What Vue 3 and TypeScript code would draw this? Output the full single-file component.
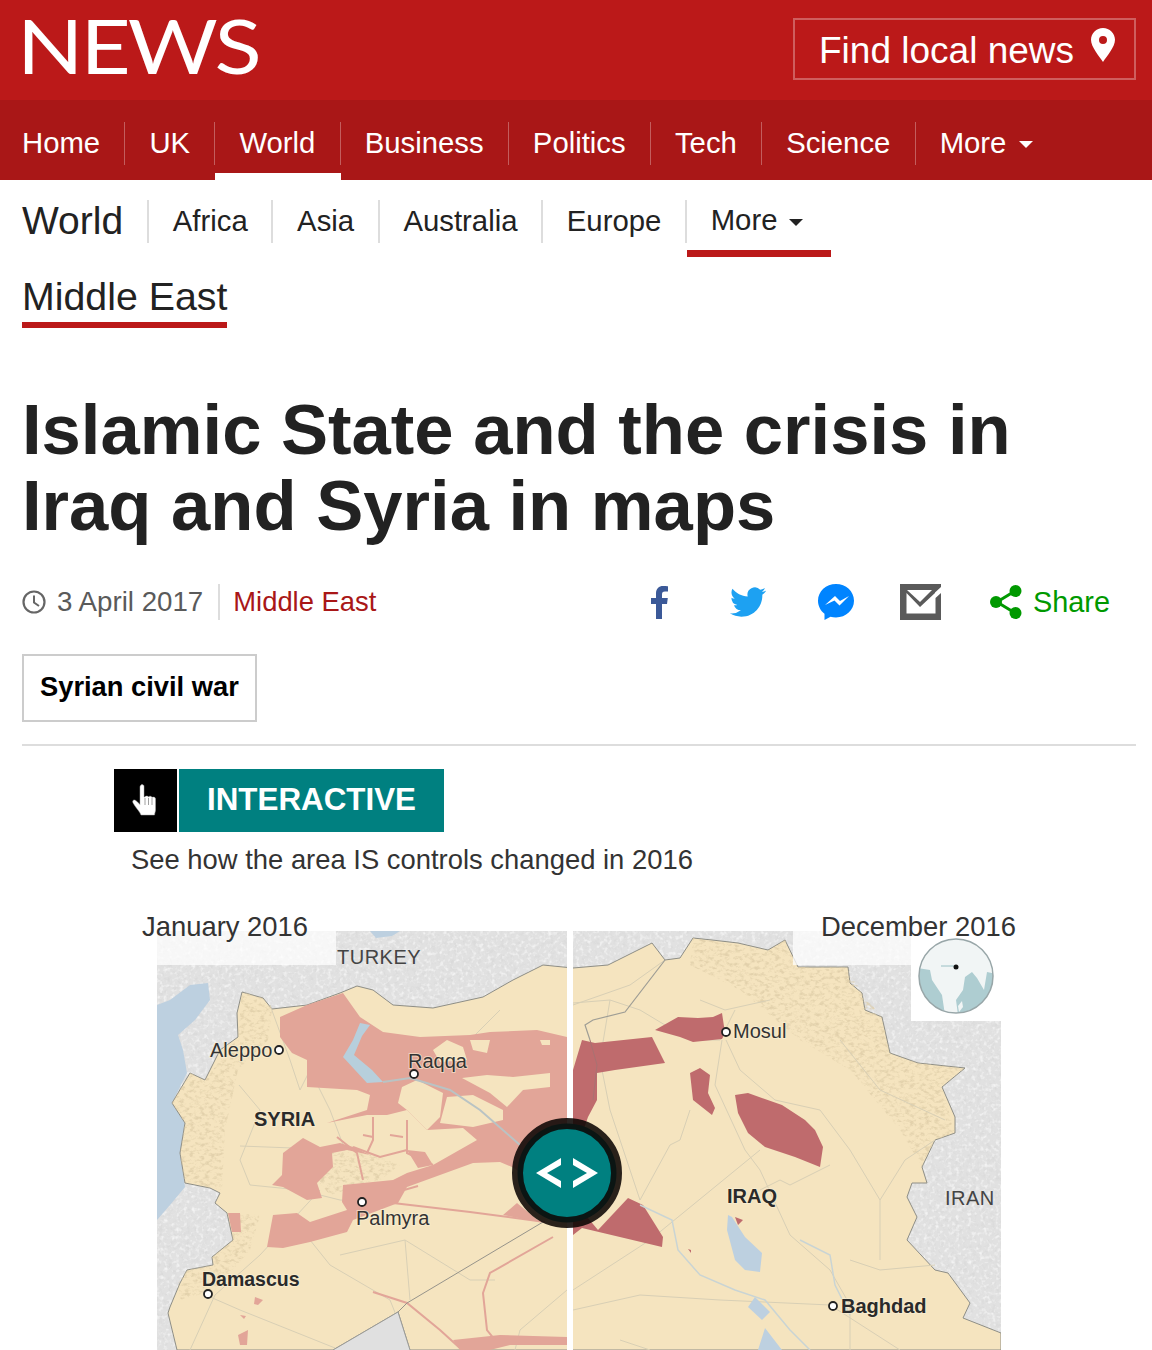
<script setup lang="ts">
const mainNav: string[] = ['Home', 'UK', 'World', 'Business', 'Politics', 'Tech', 'Science'];
const subNav: string[] = ['Africa', 'Asia', 'Australia', 'Europe'];

const roads: string[] = [
  'M573 1003 L610 1000 L640 1010 L690 1040 L720 1040 L735 1010',
  'M726 1040 L740 1070 L775 1100 L820 1110 L850 1150 L880 1200 L880 1260',
  'M722 1040 L715 1085 L745 1150 L760 1170 L790 1235 L830 1270 L850 1305 L850 1350',
  'M760 1150 L650 1240 L573 1290',
  'M610 1000 L600 1060 L610 1110 L640 1200',
  'M690 1110 L680 1140 L670 1145 L640 1200',
  'M830 1165 L790 1185 L780 1180 L760 1190',
  'M573 1310 L640 1295 L720 1300 L830 1305 L900 1350',
  'M850 1260 L880 1270 L935 1265',
  'M880 1200 L905 1160 L935 1140',
  'M573 1005 L630 985 L665 960',
  'M620 1340 L650 1350',
  'M700 1000 L725 1010 L770 1000',
  'M840 1040 L880 1090 L945 1120',
  'M239 1085 L260 1110 L240 1160 L250 1185 L300 1190 L340 1200 L397 1203',
  'M240 1146 L345 1150 L330 1110 L310 1070 L300 1090',
  'M320 1190 L260 1255 L215 1295 L190 1350',
  'M310 1240 L330 1265 L390 1300 L410 1350',
  'M405 1240 L410 1300',
  'M340 1255 L405 1240 L470 1280 L495 1280',
  'M208 1296 L240 1310 L340 1350',
  'M567 1290 L520 1330 L515 1350',
  'M270 1005 L290 1060 L300 1090',
  'M500 1010 L470 1040 L445 1100',
];
const redRoads: string[] = [
  'M337 1137 L357 1153 L363 1180',
  'M373 1117 L373 1140 L367 1153',
  'M407 1120 L407 1153 L433 1165',
  'M353 1147 L380 1157 L407 1150',
  'M363 1135 L373 1137',
  'M390 1135 L403 1137',
  'M393 1203 L470 1212 L545 1222',
  'M373 1292 L407 1303 L440 1330 L462 1350',
  'M553 1237 L490 1273 L483 1293 L487 1330 L495 1340',
  'M404 1190 L418 1186',
];
</script>

<template>
  <div class="page">
    <header class="masthead">
      <div class="logo">NEWS</div>
      <a class="local">
        <span>Find local news</span>
        <svg class="pin" viewBox="0 0 24 34" width="24" height="34">
          <path fill-rule="evenodd" fill="#fff" d="M12 0C5.400 0 0 5.300 0 11.800 0 19 8 28 12 34c4-6 12-15 12-22.200C24 5.300 18.600 0 12 0Zm0 8a4 4 0 1 1 0 8 4 4 0 0 1 0-8Z" />
        </svg>
      </a>
    </header>

    <nav class="mainnav">
      <a v-for="n in mainNav" :key="n" class="mainitem" :class="{ on: n === 'World' }">{{ n }}</a>
      <a class="mainitem last">More<i class="caret white"></i></a>
    </nav>

    <nav class="subnav">
      <a class="subhead">World</a>
      <a v-for="n in subNav" :key="n" class="subitem">{{ n }}</a>
      <a class="subitem more">More<i class="caret"></i></a>
    </nav>
    <div class="secondrow"><a class="secondlink">Middle East</a></div>

    <h1 class="title">Islamic State and the crisis in<br />Iraq and Syria in maps</h1>

    <div class="meta">
      <svg class="clock" viewBox="0 0 24 24" width="24" height="24">
        <circle cx="12" cy="12" r="10.500" fill="none" stroke="#666" stroke-width="2.200" />
        <path d="M12 5.500V12.500L17 16" fill="none" stroke="#666" stroke-width="2" />
      </svg>
      <span class="date">3 April 2017</span>
      <a class="section">Middle East</a>
      <div class="shares">
        <svg class="fb" viewBox="0 0 17 33" width="17" height="33">
          <path fill="#3b5998" d="M5 33V18H0v-6h5V7.500C5 2.500 8 0 12 0c2 0 4 .2 5 .3V5.500h-3c-2.400 0-3 1.100-3 3V12h5.800L16 18h-5v15Z" />
        </svg>
        <svg class="tw" viewBox="0 0 24 24" width="36" height="36">
          <path fill="#1da1f2" d="M23.953 4.570a10 10 0 0 1-2.825.775 4.958 4.958 0 0 0 2.163-2.723c-.951.555-2.005.959-3.127 1.184a4.920 4.920 0 0 0-8.384 4.482C7.690 8.095 4.067 6.130 1.640 3.162a4.822 4.822 0 0 0-.666 2.475c0 1.710.870 3.213 2.188 4.096a4.904 4.904 0 0 1-2.228-.616v.060a4.923 4.923 0 0 0 3.946 4.827 4.996 4.996 0 0 1-2.212.085 4.936 4.936 0 0 0 4.604 3.417 9.867 9.867 0 0 1-6.102 2.105c-.390 0-.779-.023-1.170-.067a13.995 13.995 0 0 0 7.557 2.209c9.053 0 13.998-7.496 13.998-13.985 0-.210 0-.420-.015-.630A9.935 9.935 0 0 0 24 4.590z" />
        </svg>
        <svg class="ms" viewBox="0 0 36 36" width="36" height="36">
          <path fill="#0084ff" d="M18 0C8 0 0 7.400 0 16.700c0 5.200 2.500 9.900 6.500 13V36l6-3.300c1.700.5 3.500.7 5.500.7 10 0 18-7.400 18-16.700S28 0 18 0Z" />
          <path fill="#fff" d="M7 21 17 12l5 5 9-5-9.500 9.500-5-5L7 21Z" />
        </svg>
        <svg class="mail" viewBox="0 0 41 36" width="41" height="36">
          <path fill="#5a5a5a" d="M0 0h41v36H0z" />
          <path fill="#fff" d="M7 6h25L20 18 7 6Z" />
          <path fill="#fff" d="M6.500 9l13.500 14L35 9v-.5L41 3v6l-5.500 5v15.500H6.500Z" />
        </svg>
        <span class="share">
          <svg viewBox="0 0 32 34" width="32" height="34">
            <path d="M25 6 7 17l18 11" fill="none" stroke="#009900" stroke-width="3" />
            <circle cx="25.500" cy="6" r="6" fill="#009900" />
            <circle cx="6" cy="17" r="6" fill="#009900" />
            <circle cx="25.500" cy="28" r="6" fill="#009900" />
          </svg>
          <span>Share</span>
        </span>
      </div>
    </div>

    <div class="tagrow"><a class="tag">Syrian civil war</a></div>
    <div class="rule"></div>

    <div class="badge">
      <div class="hand">
        <svg viewBox="0 0 30 36" width="30" height="36">
          <path fill="#fff" stroke="#aaa" stroke-width=".5" d="M10 2c1.500-1 3 0 3 1.500V14l1 0c0-1 3-1.500 3.500 0 .5-1 3-1.200 3.500.5.800-.7 3.500-.7 3.500 1.500V27c0 2-1 3-1 5H10c-1-3-4-6-6-9-1.500-2.500-3-4-2-5.500 1-1 2.500-.5 4 1l3 3V4c0-1 .5-1.500 1-2Z" />
          <path stroke="#888" stroke-width=".8" d="M14 15v7M17.500 15v7M21 15v7" />
        </svg>
      </div>
      <div class="label">INTERACTIVE</div>
    </div>
    <p class="lede">See how the area IS controls changed in 2016</p>

    <div class="mapwrap">
      <svg class="map" viewBox="157 905 844 445" width="844" height="445">
        <defs>
          <filter id="greyrelief" x="0" y="0" width="100%" height="100%">
            <feTurbulence type="fractalNoise" baseFrequency="0.22" numOctaves="3" seed="4" />
            <feColorMatrix type="matrix" values="0 0 0 0 .66  0 0 0 0 .66  0 0 0 0 .66  3 0 0 0 -1.450" />
          </filter>
          <filter id="whiterelief" x="0" y="0" width="100%" height="100%">
            <feTurbulence type="fractalNoise" baseFrequency="0.25" numOctaves="3" seed="11" />
            <feColorMatrix type="matrix" values="0 0 0 0 1  0 0 0 0 1  0 0 0 0 1  0 3 0 0 -1.500" />
          </filter>
          <filter id="tanrelief" x="0" y="0" width="100%" height="100%">
            <feTurbulence type="fractalNoise" baseFrequency="0.2 0.3" numOctaves="3" seed="7" />
            <feColorMatrix type="matrix" values="0 0 0 0 .72  0 0 0 0 .6  0 0 0 0 .38  3.500 0 0 0 -1.650" />
          </filter>
          <clipPath id="leftclip"><rect x="157" y="931" width="410" height="419" /></clipPath>
          <clipPath id="rightclip"><rect x="573" y="931" width="428" height="419" /></clipPath>
          <clipPath id="mapclip"><rect x="157" y="931" width="844" height="419" /></clipPath>
          <clipPath id="mtn">
            <polygon points="693,938 768,950 785,940 798,967 848,967 862,993 882,1017 890,1053 918,1063 965,1068 942,1087 955,1133 935,1140 922,1167 900,1130 850,1070 800,1040 740,990 690,965" />
            <polygon points="242,992 263,998 272,1009 268,1040 238,1070 225,1130 222,1190 185,1183 180,1153 185,1123 172,1103 190,1073 205,1080 238,1037" />
            <polygon points="227,1213 260,1215 250,1250 215,1290 180,1300 178,1283 187,1270 213,1265 212,1257 233,1240" />
            <polygon points="300,1160 350,1145 400,1165 380,1180 330,1195" />
          </clipPath>
          <clipPath id="globeclip"><circle cx="956" cy="976" r="37" /></clipPath>
        </defs>

        <g clip-path="url(#mapclip)">
          <rect x="157" y="931" width="844" height="419" fill="#e1e1e1" />
          <rect x="157" y="931" width="844" height="419" filter="url(#greyrelief)" opacity=".5" />
          <rect x="157" y="931" width="844" height="419" filter="url(#whiterelief)" opacity=".6" />

          <path fill="#bdd0e0" d="M157 1005 170 1000 190 985 208 983 210 1000 195 1020 178 1035 183 1050 187 1073 172 1103 185 1123 180 1153 185 1187 170 1205 157 1220Z" />
          <path fill="#bdd0e0" d="M370 931h30l-8 5-16 2Z" />

          <path fill="#f5e4bf" stroke="#8e8e86" stroke-width="1" d="M177 1350 168 1313 170 1307 180 1283 187 1270 213 1265 212 1257 233 1240 227 1213 215 1203 220 1193 210 1188 185 1183 180 1153 185 1123 172 1103 190 1073 205 1080 220 1050 238 1037 237 1013 242 992 263 998 272 1009 307 1005 340 993 357 986 373 990 393 1005 433 1008 483 997 513 980 543 965 573 968 608 965 652 943 665 960 680 958 693 938 712 940 738 943 768 950 785 940 798 967 848 967 850 983 862 993 865 1010 882 1017 890 1053 918 1063 965 1068 942 1087 955 1117 955 1133 935 1140 922 1167 927 1183 912 1183 907 1197 917 1217 907 1240 935 1270 948 1273 970 1303 963 1318 1001 1333 1001 1350 410 1350 398 1312 333 1350Z" />
          <rect x="157" y="931" width="844" height="419" clip-path="url(#mtn)" filter="url(#tanrelief)" opacity=".75" />

          <path v-for="(d, i) in roads" :key="'r' + i" :d="d" fill="none" stroke="#d8cfb5" stroke-width="1" />

          <g clip-path="url(#leftclip)">
            <path fill="#e2a598" d="M280 1017 307 1005 343 993 360 1017 383 1032 420 1037 470 1035 490 1032 537 1030 567 1037 567 1200 512 1167 500 1162 473 1163 407 1187 398 1203 353 1220 347 1232 310 1242 283 1248 267 1247 273 1215 297 1213 310 1222 347 1210 342 1202 343 1185 373 1182 393 1180 407 1173 433 1165 477 1140 463 1128 427 1130 407 1110 387 1115 367 1115 327 1123 367 1110 370 1095 357 1090 307 1087 307 1060 292 1053 280 1037Z" />
            <path fill="#e2a598" d="M283 1153 303 1138 320 1147 340 1143 353 1147 370 1155 347 1150 332 1153 333 1167 317 1183 322 1198 307 1200 283 1187 272 1185 282 1175Z" />
            <path fill="#e2a598" d="M228 1213 240 1213 241 1232 232 1232ZM503 1215 517 1203 540 1222ZM453 1340 500 1335 567 1337 567 1345 510 1345 490 1350 460 1350ZM255 1297 263 1300 258 1305 254 1304ZM240 1315 246 1316 244 1319ZM238 1335 248 1330 247 1345 240 1345ZM407 1150 425 1152 433 1165 418 1168Z" />
            <path fill="#f5e4bf" d="M402 1087 417 1080 443 1093 440 1117 427 1130 407 1110 398 1103ZM447 1097 473 1095 503 1110 503 1120 473 1127 440 1123ZM462 1078 487 1075 513 1077 550 1073 550 1087 523 1090 507 1107 490 1093ZM433 1050 447 1040 463 1047 467 1060 440 1062ZM470 1040 490 1040 487 1053 473 1050ZM540 1040 550 1040 550 1045 542 1045Z" />
            <path d="M360 1023 353 1040 343 1057 367 1083 383 1082 372 1070 354 1055 362 1036 370 1025Z" fill="#b7cfdc" />
            <path d="M383 1082 410 1078 450 1090 480 1110 520 1145" fill="none" stroke="#b9c3c4" stroke-width="2" />
            <path v-for="(d, i) in redRoads" :key="i" :d="d" fill="none" stroke="#e2a598" stroke-width="2" />
          </g>

          <g clip-path="url(#rightclip)">
            <path fill="#bf6b6d" d="M655 1030 678 1017 698 1018 713 1017 722 1013 725 1033 722 1039 693 1042 680 1037ZM573 1070 582 1040 595 1043 652 1037 665 1063 615 1070 597 1073 597 1100 588 1117 580 1140 573 1140ZM690 1073 700 1068 710 1075 708 1093 715 1108 712 1115 693 1100ZM735 1095 748 1093 782 1105 805 1120 815 1130 823 1147 820 1167 795 1157 765 1147 748 1133 738 1113ZM598 1230 628 1198 643 1205 663 1237 662 1247 582 1228 573 1235 573 1200ZM735 1217 743 1220 738 1225ZM688 1249 691 1250 691 1253Z" />
            <path fill="#bdd0e0" d="M728 1215 727 1230 735 1260 745 1270 760 1272 762 1253 745 1237 732 1217ZM748 1307 755 1297 770 1312 762 1320ZM758 1350 765 1328 782 1350Z" />
            <path d="M640 1205 672 1220 678 1250 700 1275 735 1290 765 1300 790 1330 810 1350M800 1240 830 1255 835 1285 850 1315" fill="none" stroke="#c9d4d4" stroke-width="1.500" />
          </g>

          <path d="M333 1350 398 1312 410 1350" fill="#e0e0e0" stroke="#9b9b96" stroke-width="1" />
          <path d="M398 1312 407 1303 543 1222" fill="none" stroke="#96938a" stroke-width="1" />
          <path d="M590 1040 585 1025 593 1020 625 1012 665 960" fill="none" stroke="#9e9d95" stroke-width="1.200" />
          <path d="M590 1040 597 1065 593 1100" fill="none" stroke="#a87272" stroke-width="1" clip-path="url(#rightclip)" />

          <rect x="157" y="931" width="179" height="34" fill="#fff" opacity=".72" />
          <rect x="793" y="931" width="118" height="34" fill="#fff" opacity=".72" />
          <rect x="911" y="931" width="90" height="90" fill="#fff" />

          <rect x="567" y="931" width="6" height="419" fill="#fff" />

          <g clip-path="url(#globeclip)">
            <circle cx="956" cy="976" r="37" fill="#f1f5f5" />
            <path fill="#aecdd1" d="M918 968 930 970 932 980 942 995 945 1015 925 1012 915 990Z" />
            <path fill="#aecdd1" d="M958 1015 956 1000 963 990 965 977 972 972 977 978 984 990 987 972 996 974 996 1015Z" />
            <path fill="#f1f5f5" d="M958 1006l4-5 1 6-4 5Z" />
          </g>
          <circle cx="956" cy="976" r="37" fill="none" stroke="#98a6a8" stroke-width="1.500" />
          <path d="M941 966h15" stroke="#9ac0c4" stroke-width="1" />
          <circle cx="956" cy="967" r="2.500" fill="#111" />

          <text x="337" y="964" class="t thin">TURKEY</text>
          <text x="210" y="1057" class="t">Aleppo</text>
          <text x="408" y="1068" class="t">Raqqa</text>
          <text x="254" y="1126" class="t bold">SYRIA</text>
          <text x="356" y="1225" class="t">Palmyra</text>
          <text x="202" y="1286" class="t bold dam">Damascus</text>
          <text x="733" y="1038" class="t">Mosul</text>
          <text x="727" y="1203" class="t bold">IRAQ</text>
          <text x="945" y="1205" class="t thin">IRAN</text>
          <text x="841" y="1313" class="t bold">Baghdad</text>

          <circle cx="279" cy="1050" r="4" class="dot" />
          <circle cx="414" cy="1074" r="4" class="dot" />
          <circle cx="362" cy="1202" r="4" class="dot" />
          <circle cx="208" cy="1294" r="4" class="dot" />
          <circle cx="726" cy="1032" r="4" class="dot" />
          <circle cx="833" cy="1306" r="4" class="dot" />

          <circle cx="567" cy="1173" r="49.500" fill="#008080" stroke="#0c0603" stroke-opacity=".88" stroke-width="11" />
          <path fill="#fff" d="M561 1158 536 1173 561 1188 561 1181 547 1173 561 1165ZM573 1158 598 1173 573 1188 573 1181 587 1173 573 1165Z" />
        </g>

        <text x="142" y="936" class="cap">January 2016</text>
        <text x="821" y="936" class="cap">December 2016</text>
      </svg>
    </div>
  </div>
</template>

<style scoped>
.page { width: 1152px; height: 1350px; overflow: hidden; background: #fff; font-family: "Liberation Sans", Arial, sans-serif; color: #222; }
.masthead { height: 100px; background: #bb1919; display: flex; justify-content: space-between; padding: 0 16px 0 22px; box-sizing: border-box; }
.logo { font-family: Lato, sans-serif; font-weight: 400; font-size: 75px; line-height: 90px; color: #fff; letter-spacing: -2.500px; margin-left: -5px; transform: scaleX(1.16); transform-origin: left center; }
.local { margin-top: 18px; height: 62px; width: 343px; box-sizing: border-box; border: 2px solid rgba(255,255,255,.3); display: flex; align-items: center; padding-left: 24px; color: #fff; font-size: 37px; }
.local span { margin-top: 3px; }
.pin { margin: -8px 0 0 17px; }
.mainnav { height: 80px; background: #a91717; display: flex; padding: 22px 0 0 22px; box-sizing: border-box; }
.mainitem { position: relative; height: 43px; line-height: 42px; padding: 0 24.150px; color: #fff; font-size: 29.300px; border-right: 1px solid rgba(255,255,255,.3); }
.mainitem:first-child { padding-left: 0; }
.mainitem.last { border-right: 0; }
.mainitem.on::after { content: ""; position: absolute; left: 0; right: -1px; bottom: -15px; height: 7px; background: #fff; }
.caret { display: inline-block; margin-left: 12px; vertical-align: middle; border: 7px solid transparent; border-bottom: 0; border-top: 7px solid #222; }
.caret.white { border-top-color: #fff; margin-top: -2px; margin-left: 13px; }
.subnav { display: flex; padding: 20px 0 0 22px; height: 97px; box-sizing: border-box; }
.subhead { height: 43px; line-height: 41px; padding-right: 24px; font-size: 39px; border-right: 2px solid #ddd; }
.subitem { height: 43px; line-height: 42px; padding: 0 23.700px; font-size: 29.300px; border-right: 2px solid #ddd; }
.subitem.more { position: relative; border-right: 0; line-height: 40px; padding-right: 28px; }
.subitem.more::after { content: ""; position: absolute; left: 0; right: 0; bottom: -14px; height: 7px; background: #bb1919; }
.secondrow { height: 51px; padding: 0 0 0 22px; }
.secondlink { display: inline-block; height: 45px; line-height: 38px; font-size: 39.300px; border-bottom: 6px solid #bb1919; }
.title { margin: 64px 0 0 22px; font-size: 70.600px; line-height: 76px; font-weight: 700; color: #222; }
.meta { margin-top: 40px; height: 36px; display: flex; align-items: center; padding: 0 42px 0 22px; }
.clock { flex: none; }
.date { margin-left: 11px; padding-right: 15px; font-size: 27.700px; color: #5a5a5a; border-right: 2px solid #ddd; line-height: 36px; }
.section { margin-left: 13px; font-size: 27.400px; color: #a91717; line-height: 38px; }
.shares { margin-left: auto; display: flex; align-items: center; }
.tw { margin-left: 62px; }
.ms { margin-left: 52px; }
.mail { margin-left: 46px; }
.share { margin-left: 49px; display: flex; align-items: center; gap: 11px; color: #009900; font-size: 28.900px; }
.tagrow { margin-top: 34px; padding-left: 22px; display: flex; }
.tag { display: block; border: 2px solid #ccc; padding: 0 16px; height: 68px; box-sizing: border-box; line-height: 62px; font-size: 27.300px; font-weight: 700; color: #000; }
.rule { margin: 22px 16px 0 22px; height: 2px; background: #ddd; }
.badge { margin: 23px 0 0 114px; display: flex; gap: 2px; height: 63px; }
.hand { width: 63px; background: #000; display: flex; align-items: center; justify-content: center; }
.label { width: 265px; box-sizing: border-box; padding-left: 28px; background: #008080; color: #fff; font-weight: 700; font-size: 31.350px; line-height: 61px; }
.lede { margin: 11px 0 0 131px; font-size: 27.400px; line-height: 34px; color: #333; }
.mapwrap { margin: 28px 0 0 157px; height: 445px; }
.map { display: block; overflow: visible; }
.t { font-family: "Liberation Sans", Arial, sans-serif; font-size: 20px; fill: #333; paint-order: stroke; stroke: rgba(250,240,215,.6); stroke-width: 2px; }
.t.thin { fill: #444; letter-spacing: .5px; stroke: none; }
.t.bold { font-weight: 700; fill: #2a2a2a; }
.t.dam { font-size: 19.500px; }
.dot { fill: #fff; stroke: #222; stroke-width: 1.800; }
.cap { font-family: "Liberation Sans", Arial, sans-serif; font-size: 27.400px; fill: #333; }
</style>

<style>
html, body { margin: 0; background: #fff; }
</style>
